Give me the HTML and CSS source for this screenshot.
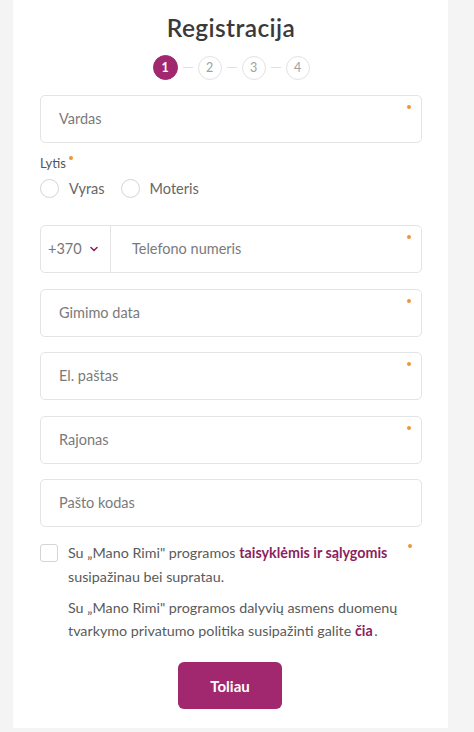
FILE: index.html
```html
<!DOCTYPE html>
<html lang="lt">
<head>
<meta charset="utf-8">
<title>Registracija</title>
<link rel="stylesheet" href="styles.css">
</head>
<body>
<main class="card">
  <h1 class="title">Registracija</h1>
  <ol class="steps">
    <li class="step active">1</li>
    <li class="step-line"></li>
    <li class="step">2</li>
    <li class="step-line"></li>
    <li class="step">3</li>
    <li class="step-line"></li>
    <li class="step">4</li>
  </ol>

  <form class="form">
    <div class="field"><span class="placeholder">Vardas</span><span class="req"></span></div>

    <div class="gender">
      <div class="label">Lytis<span class="req-inline"></span></div>
      <div class="radios">
        <label class="radio"><span class="radio-circle"></span>Vyras</label>
        <label class="radio"><span class="radio-circle"></span>Moteris</label>
      </div>
    </div>

    <div class="fields">
      <div class="field phone">
        <div class="prefix">+370
          <svg class="chev" width="8" height="6" viewBox="0 0 8 6"><path d="M1 1.5 L4 4.5 L7 1.5" fill="none" stroke="#8b1f5f" stroke-width="1.5" stroke-linecap="round"/></svg>
        </div>
        <span class="placeholder phone-ph">Telefono numeris</span><span class="req"></span>
      </div>
      <div class="field"><span class="placeholder">Gimimo data</span><span class="req"></span></div>
      <div class="field"><span class="placeholder">El. paštas</span><span class="req"></span></div>
      <div class="field"><span class="placeholder">Rajonas</span><span class="req"></span></div>
      <div class="field"><span class="placeholder">Pašto kodas</span></div>
    </div>

    <div class="consent">
      <span class="checkbox"></span>
      <div class="consent-text">
        <p class="p1">Su „Mano Rimi" programos <a class="link">taisyklėmis ir sąlygomis</a> susipažinau bei supratau.</p>
        <p class="p2">Su „Mano Rimi" programos dalyvių asmens duomenų tvarkymo privatumo politika susipažinti galite <a class="link">čia</a>.</p>
      </div>
      <span class="req consent-req"></span>
    </div>

    <div class="actions">
      <button type="button" class="btn">Toliau</button>
    </div>
  </form>
</main>
</body>
</html>
```
FILE: styles.css
```css
* { box-sizing: border-box; }
html, body { margin: 0; padding: 0; }
body {
  background: #f4f4f4;
  font-family: "Lato", "Open Sans", sans-serif;
  color: #555;
  width: 474px;
  height: 732px;
  overflow: hidden;
  line-height: 1.2;
}
.card {
  margin-left: 13px;
  width: 435px;
  height: 728px;
  background: #fff;
  padding: 13px 26px 0 27px;
}
.title {
  margin: 0;
  text-align: center;
  font-size: 24.5px;
  line-height: 30px;
  font-weight: 600;
  color: #3a3a3a;
  letter-spacing: 0.4px;
}
.steps {
  list-style: none;
  margin: 12px 0 0;
  padding: 0;
  display: flex;
  justify-content: center;
  align-items: center;
}
.step {
  width: 24px;
  height: 24px;
  border-radius: 50%;
  border: 1.5px solid #e2e2e2;
  color: #a0a0a0;
  font-size: 12.5px;
  display: flex;
  align-items: center;
  justify-content: center;
}
.step.active {
  width: 25px;
  height: 25px;
  background: #a1276f;
  border-color: #a1276f;
  color: #fff;
  font-weight: 700;
}
.step-line {
  width: 10px;
  height: 1px;
  background: #e0e0e0;
  margin: 0 5px;
}
.form { margin-top: 15px; }
.field {
  position: relative;
  height: 48px;
  border: 1.5px solid #e4e4e4;
  border-radius: 5px;
  display: flex;
  align-items: center;
  padding-left: 18px;
}
.placeholder {
  font-size: 14.5px;
  color: #7a7a7a;
}
.req {
  position: absolute;
  top: 9px;
  right: 10px;
  width: 4px;
  height: 4px;
  border-radius: 50%;
  background: #f0953a;
}
.gender { margin-top: 12px; }
.label {
  display: block;
  width: max-content;
  font-size: 13px;
  line-height: 16px;
  color: #555;
  position: relative;
}
.req-inline {
  position: absolute;
  top: 1px;
  right: -7px;
  width: 4px;
  height: 4px;
  border-radius: 50%;
  background: #f0953a;
}
.radios {
  margin-top: 8px;
  display: flex;
  gap: 16px;
}
.radio {
  display: flex;
  align-items: center;
  font-size: 14.5px;
  color: #666;
  line-height: 19px;
}
.radio-circle {
  width: 19px;
  height: 19px;
  border: 1.5px solid #d4d4d4;
  border-radius: 50%;
  margin-right: 10px;
}
.fields {
  margin-top: 27px;
  display: flex;
  flex-direction: column;
  gap: 15.5px;
}
.phone { padding-left: 0; }
.prefix {
  width: 70px;
  height: 100%;
  border-right: 1.5px solid #e4e4e4;
  display: flex;
  align-items: center;
  padding-left: 7px;
  font-size: 14.5px;
  color: #777;
}
.chev { margin-left: 8px; }
.phone-ph { margin-left: 21px; }
.consent {
  position: relative;
  margin-top: 17px;
  display: flex;
  align-items: flex-start;
}
.checkbox {
  flex: none;
  width: 18px;
  height: 18px;
  border: 1.5px solid #d4d4d4;
  border-radius: 3px;
  margin-right: 10px;
}
.consent-text {
  font-size: 14.3px;
  line-height: 24px;
  color: #5a5a5a;
  margin-top: -3px;
  padding-right: 10px;
}
.consent-text p { margin: 0; }
.consent-text .p2 { margin-top: 7px; line-height: 23px; }
.link {
  color: #8b1f5f;
  font-weight: 700;
}
.p2 .link { margin-right: 1.5px; }
.consent-req { top: 0; right: 10px; }
.actions {
  margin-top: 20px;
  display: flex;
  justify-content: center;
}
.btn {
  width: 104px;
  height: 47px;
  border: none;
  border-radius: 6px;
  background: #a1276f;
  color: #fff;
  font-family: inherit;
  font-weight: 700;
  font-size: 15px;
  margin-left: -2px;
}
```
